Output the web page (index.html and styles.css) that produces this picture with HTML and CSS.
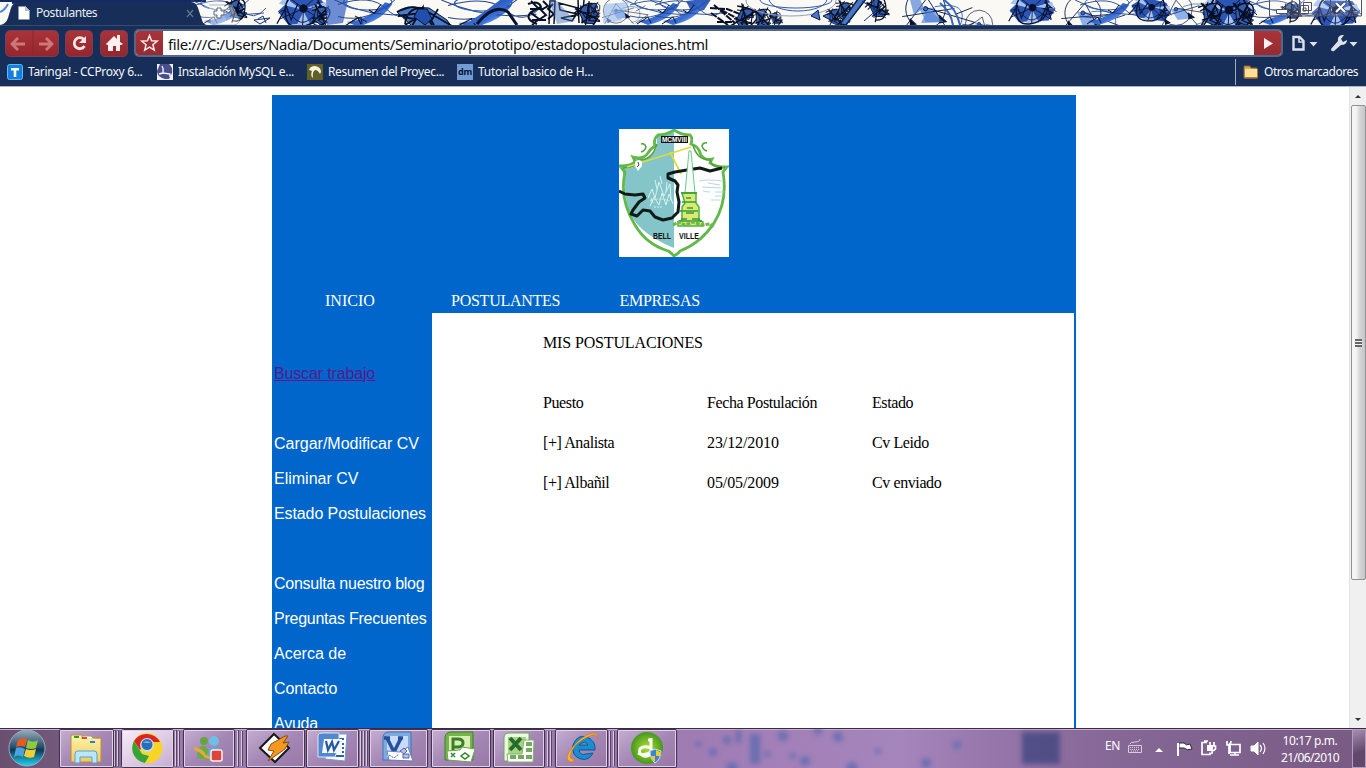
FILE: index.html
```html
<!DOCTYPE html>
<html lang="es">
<head>
<meta charset="utf-8">
<title>Postulantes</title>
<link rel="stylesheet" href="styles.css">
</head>
<body>
<div class="screen">
<header class="browser">
  <div class="tabstrip">
    <svg class="art" width="1366" height="25" viewBox="0 0 1366 25">
      <defs>
        <linearGradient id="ink" x1="0" y1="0" x2="1" y2="1"><stop offset="0" stop-color="#1c3f9c"/><stop offset=".6" stop-color="#3a70d8"/><stop offset="1" stop-color="#dce8fb"/></linearGradient>
        <g id="wheel" fill="none" stroke="#0a1638">
          <path d="M3 12 18-2 48-1 57 10 49 24 14 26Z" fill="#2c55b4" stroke="none"/>
          <path d="M28 10 4 4 10-3Z M30 12 22 28 38 27Z M34 8 53 2 56 11Z" fill="#a5c2f3" stroke="none"/>
          <circle cx="30" cy="9" r="4" fill="#070d22"/><path d="M11 8Q12-5 28-8t20 16q-1 17-20 20T11 8" stroke-width="1.700"/>
          <path d="M30 9 5 20M30 9 52 23M30 9 44-4M30 9 14-3M30 9 29 27M4 14C14 2 20 30 34 22S48 2 58 14"/>
          <path d="M2 25 12 7l5 14 7-17M39 25l8-19 5 17M44 2l8 7-9 1 11 5-12 3" stroke-width="1.400"/>
        </g>
        <g id="sweep" fill="none">
          <path d="M8 21Q28 19 43 3L49 5Q40 20 18 25Z" fill="url(#ink)"/>
          <path d="M0 5Q30-5 44 9T70 8M0 16Q28 23 55-2M-5 0Q31 19 68 13" stroke="#26458f" stroke-width=".9"/>
          <ellipse cx="27" cy="3" rx="22" ry="7" stroke="#2858b6"/><path d="m7 24 11-7 3 6m7-13 5 3 6-8" stroke="#071027"/>
        </g>
        <g id="scrawl" fill="none" stroke="#060d22">
          <path d="M4 5 14 0 20 7 10 14 24 19 16 25 5 20Z" fill="#345eae"/>
          <path d="M-2 5Q28-7 23 12T5 25M1 0 23 24M20-2 3 27M2 19l20-6" stroke-width="1.500"/>
          <path d="m8 7 6 4 3-7 4 10-10 5 12 6M0 9l7-3 2 9 8-4M3 0l3 6 3-7m2 21 3-7 3 4" stroke-width="1.200"/>
        </g>
        <g id="compass" fill="none" stroke="#0b1a48" stroke-width=".8">
          <path d="m14 8 14-2 9 12-15 2Z" fill="#8eb0ea" stroke="none"/><path d="M28 5q24-8 26 5T42 25" stroke="#336bc8"/>
          <circle cx="20" cy="8" r="18"/><path d="M20-2 4 27M20-2 45 27M0 18l46-14M20 7 66 14 48 26M48 9l14-8"/><circle cx="20" cy="8" r="2" fill="#3866c2"/><path d="m7 19 6 4-5 2M33 12l7 5-6 2" fill="#081026" stroke-width="1.200"/>
        </g>
      </defs>
      <rect width="1366" height="25" fill="#faf9f3"/>
      <g stroke="#142a67" fill="none"><path d="M0 1H206M12 3l18-3 14 2 12-2 13 3 18-2 15 1 22-3 13 3 19-2 21 3 21-3" stroke-width="2"/><path d="M0 12q5-2 8-8" stroke="#4f86dc" stroke-width="2"/></g>
      <use href="#sweep" x="196"/><use href="#scrawl" transform="translate(225 2) rotate(-12) scale(.8)"/><path d="m254 20 16-2-10 6Zm4-1 5-3 3 7" fill="none" stroke="#17357d"/>
      <use href="#wheel" transform="translate(275 0) scale(.95)"/><use href="#scrawl" transform="translate(314 4) rotate(15) scale(.75)"/><path d="m326 0 22 0-5 23-16 2Z" fill="#315ec2" opacity=".7"/>
      <use href="#sweep" transform="translate(338 -1) scale(1.1)"/><path d="m352 21 9-4 1 7m-7-8 12 6" fill="none" stroke="#111b36"/>
      <g fill="none" stroke="#081127"><path d="m397 12 15-5 17 1 18 12 4 6h-39Z" fill="#477ccc"/><path d="M397 12q24-14 37 13M405 24q2-15 15-16l12 17M398 16l30-4 24 14M412 26l11-19 2 19m-22-9 12 2-10 6m33-16-8 14" stroke-width="1.800"/><path d="m418 9 9 0 5 10-7 6-11-8Z" fill="#224fae"/></g>
      <use href="#sweep" transform="translate(448 0) scale(1.3 1.1)"/><path d="M469 22Q485 12 500 0L514 0Q497 16 482 25Z" fill="url(#ink)"/><path d="M477 24Q494 3 508 12l9 13" fill="none" stroke="#07132f" stroke-width="3"/>
      <g fill="none" stroke="#071127" stroke-width="2"><path d="M528 4q11-4 13 3l-10 5q-7 7 6 12M531 1l7 7-7 5 8 6-7 6m11-24 5 5-7 4 5 5-6 4m13-15-5 5 6 5-6 5M530 9h14m-12 11h14"/><path d="m549 24 1-23 5 0-1 23m5-21 19 5-1 6-17-4Zm2 15 15-3-4 6Zm17-18 1 23m5-23-2 23" stroke-width="1.500"/></g><path d="m549 1 8 0 18 20-18 3Z" fill="#3d6abc" opacity=".45"/>
      <use href="#scrawl" transform="translate(574 9) rotate(-22) scale(.85)"/><use href="#scrawl" transform="translate(587 3) scale(.55)"/><use href="#compass" transform="translate(602 5) scale(.7)"/><path d="m605 4 24-2-8 19-18 2Z" fill="#92b7ed" opacity=".6"/>
      <use href="#sweep" x="630"/><path d="m686 1 26-3-8 12-12 3Z" fill="#365fc0"/><use href="#sweep" x="655"/>
      <path d="m710 8 17 1 23 9m-39-5 17 12m-14-20 21 18m-14-13 27 14m-31-2h17" fill="none" stroke="#0a1025" stroke-width="2" stroke-dasharray="7 1"/>
      <use href="#scrawl" transform="translate(741 3) rotate(30) scale(.9)"/><use href="#scrawl" transform="translate(753 9) scale(.75)"/><use href="#scrawl" transform="translate(768 15) rotate(-20) scale(.5)"/>
      <g fill="none" stroke="#3158aa"><ellipse cx="796" cy="0" rx="36" ry="8"/><ellipse cx="798" cy="-1" rx="29" ry="12"/><ellipse cx="791" cy="1" rx="45" ry="15" stroke="#8ba1ce"/></g>
      <path d="m811 16 7-6 2 10Zm12 0 13-6-2 12Z" fill="#4675d2" stroke="#0a1a46"/><use href="#scrawl" transform="translate(827 9) scale(.65)"/><use href="#scrawl" transform="translate(838 0) rotate(15) scale(.75)"/><path d="M840 24 858-1h8l-20 26Z" fill="#4677c9" stroke="#101e40" stroke-width="1.500"/><use href="#scrawl" transform="translate(865 3) rotate(-22) scale(.8)"/><path d="m862 1 24 17m-1-15-21 18m10-23 0 20" stroke="#123684"/>
      <use href="#compass" transform="translate(905 -3) rotate(8) scale(1.100)"/><path d="m910 0 10-1 4 9-10 7Zm18 9 16 13-23 1Z" fill="#4c7ed4" opacity=".65"/><path d="M944 0q12 8 16 25M940 3q11 9 13 22" fill="none" stroke="#3866bb" stroke-width="2"/>
      <use href="#compass" transform="translate(968 12) rotate(25) scale(.75)"/><use href="#wheel" transform="translate(1007 0) scale(.85)"/>
      <use href="#compass" transform="translate(1065 1) rotate(12)"/><use href="#sweep" x="1080"/><use href="#wheel" transform="translate(1131 -4) rotate(12) scale(.75)"/><use href="#compass" transform="translate(1158 2) scale(.9)"/>
      <use href="#wheel" transform="translate(1199 1) scale(1)"/><use href="#scrawl" transform="translate(1200 3) scale(.9)"/><use href="#scrawl" transform="translate(1232 3) scale(.9)"/><use href="#sweep" x="1252"/><use href="#scrawl" transform="translate(1280 7) rotate(-25) scale(.7)"/><use href="#wheel" transform="translate(1309 2) scale(.9)"/>
      <path d="M206 0h12l8 19q1 6-7 6H200Z" fill="#f5f6f8" opacity=".25"/>
      <path d="M209 5h23l7 14q1 5-5 6h-23" fill="#fff" fill-opacity=".35" stroke="#8795ad" stroke-opacity=".65"/>
      <path d="M217 8h4v3h3v4h-3v3h-4v-3h-3v-4h3Z" fill="#fff" stroke="#5b6576"/>
      <path d="M0 25Q6 24 8 18L11 8Q13 2 18 2H191Q196 2 198 8L202 20Q203 25 208 25Z" fill="#172e58"/>
      <path d="m187 10 6 7m0-7-6 7" stroke="#65738d" stroke-width="1.300"/>
      <path d="M18.500 6.500h7l4 4v9h-11Z" fill="#fff"/><path d="M25 6v5h5Z" fill="#b9c2d0"/>
      <path d="M1269 0h93v16h-93Z" fill="#fff" opacity=".18"/>
      <g fill="none" stroke="#4d5364"><path d="M1269.500 0v16h92V0M1299.500 0v16M1330.500 0v16"/><path d="M1276.500 9.500h11v4h-11Z" fill="#fff"/><path d="M1303.500 2.500h8v8h-8ZM1300.500 5.500h8v8h-8ZM1303 8h3v3h-3Z" fill="#fff"/><path d="m1336 3 9 9m0-9-9 9" stroke="#34394c" stroke-width="3.500"/><path d="m1336 3 9 9m0-9-9 9" stroke="#fff" stroke-width="2.200"/></g>
    </svg>
    <span class="tab-title">Postulantes</span>
  </div>
  <div class="toolbar">
    <div class="navbtn pair"><svg width="54" height="26"><path d="M27 0v26" stroke="#8b2431"/><path d="m12 7-6 6 6 6M6 13h13M40 7l6 6-6 6M46 13H33" fill="none" stroke="#cf777b" stroke-width="2.800"/></svg></div>
    <div class="navbtn reload"><svg width="28" height="26"><path d="M17.800 8.500A5.500 5.500 0 1 0 18.500 15" fill="none" stroke="#f9e5e5" stroke-width="2.800"/><path d="M20 5v7h-7Z" fill="#f9e5e5"/></svg></div>
    <div class="navbtn home"><svg width="28" height="26"><path d="m5 13 8-8 3 3V4h3v7l3 2-2 1h-1v6h-4v-5h-3v5H7v-6H6Z" fill="#fff1f1"/></svg></div>
    <div class="omnibox">
      <div class="star"><svg width="27" height="26"><path d="m13.500 4.500 2.100 5.200 5.600.4-4.300 3.600 1.400 5.500-4.800-3-4.800 3 1.300-5.500-4.200-3.600 5.600-.4Z" fill="none" stroke="#ffe9e9" stroke-width="1.500"/></svg></div>
      <span class="url">file:///C:/Users/Nadia/Documents/Seminario/prototipo/estadopostulaciones.html</span>
      <div class="go"><svg width="27" height="26"><path d="m10 7 9 5.500-9 5.500Z" fill="#fff1f1"/></svg></div>
    </div>
    <svg class="menus" width="78" height="28"><path d="M10.500 7h6l4 4v8.500h-10Z" fill="#172e58" stroke="#dce2ec" stroke-width="2.400"/><path d="M16 7v5h5" fill="none" stroke="#dce2ec" stroke-width="1.600"/><path d="M26.500 12h8l-4 4.500ZM66.500 12h8l-4 4.500Z" fill="#dce2ec"/><path d="m48 19 7-8q-1-5 4-6h2l-3 4 2 3 4-2q0 5-6 5l-7 6q-3 1-3-2Z" fill="#dce2ec"/></svg>
  </div>
  <nav class="bookmarks">
    <a class="bm bm1"><svg width="16" height="16"><rect x=".5" y=".5" width="15" height="15" rx="2" fill="#1180df" stroke="#64b4f5"/><path d="M4 4h8v2.500H9.300V13H6.700V6.500H4Z" fill="#fff"/></svg><span>Taringa! - CCProxy 6...</span></a>
    <a class="bm bm2"><svg width="16" height="16"><path d="M0 0h16v16H0Z" fill="#f1f1f8"/><path d="M3 0h9q4 3 3 9l-3 6H8Q0 13 0 7Z" fill="#494e91"/><path d="M5 2q2 3 1 7l7 1v3M6 9l-4 1" fill="none" stroke="#fff" stroke-width="1.300"/></svg><span>Instalación MySQL e...</span></a>
    <a class="bm bm3"><svg width="16" height="16"><path d="M0 0h16v16H0Z" fill="#605f27"/><path d="M2 6q1-4 6-4 6 1 6 6l-1 2q-2-4-5-4-3 2-2 8-3-2-1-7Z" fill="#f5f4df"/></svg><span>Resumen del Proyec...</span></a>
    <a class="bm bm4"><i class="dm">dm</i><span>Tutorial basico de H...</span></a>
    <a class="bm others"><svg width="16" height="16"><path d="M1 2h6l1 2h6v10H1Z" fill="#dba84e" stroke="#81653c"/><path d="M2 5h12v8H2Z" fill="#ffe09a"/><path d="M14.500 5v9H2" fill="none" stroke="#b4772c"/></svg><span>Otros marcadores</span></a>
  </nav>
</header>
<main class="viewport">
  <div class="site">
    <div class="banner">
      <svg class="crest" width="110" height="128" viewBox="0 0 110 128">
        <rect width="110" height="128" fill="#fff"/>
        <path d="M55 2v117Q15 103 8 76L3 38q11-1 12-8h8q10 0 15-12V6Z" fill="#83c5c8"/>
        <path d="M39 6q8 0 16-5 8 5 16 5 3 3 1 9 8 3 9 9 3 8 12 6l-2 4q5 4 17 4l-4 5q5 29-9 51-13 20-34 28-1 2-6 5-5-5-6-5-22-7-33-26Q0 70 6 43l-5-6q13 0 15-5l-2-4q10 3 15-4 2-4 7-7-2-7 3-11Z" fill="none" stroke="#62b848" stroke-width="2.800"/>
        <path d="M4 39q14-1 15-8 14 1 19-16M106 39q-13 0-15-8-13 0-17-15M22 15q4-1 5 3-1 4-5 5M88 14q-4-1-5 3 1 4 5 5" fill="none" stroke="#54a33c" stroke-width="1.500"/>
        <path d="M8 38 72 18M51 23l11 22" stroke="#dedc3b" stroke-width="1.700"/><path d="M16 33q4-4 7 0v4l-4 5-3-5Z" fill="#fff"/><path d="M19 33l1 3-2 2" fill="none" stroke="#444"/>
        <path d="M0 62 6 65 16 66 24 65 26 69 20 73 14 81 12 85 18 87 24 81 31 82 36 88 44 91 53 89 59 83 60 73 58 63 59 56 56 52 49 49 49 45 56 43 68 41 81 39 91 42 103 39" fill="none" stroke="#101b18" stroke-width="3" stroke-linejoin="round"/>
        <g fill="none" stroke="#d9f1ee"><path d="m29 69 4-9 3 9 4-16 5 14 6-12 1 16M31 77l4-9 5 8 3-12 4 12 3-11 4 10M38 60l-2-9m7 4-2-8m6 16 1-10M34 74l-2-5"/><path d="M31 72q8-4 20 0M35 78h9" stroke-dasharray="2 1"/></g>
        <path d="m70 22-4 42h10L72 22Z" fill="#f4fff8" stroke="#73c693"/><path d="M63 64h14v10l3 4v13l4 2v4H59v-4l4-2V78l3-4Z" fill="#dce874" stroke="#48b640" stroke-width="1.500"/>
        <path d="M67 69h5m-5 4h5m-4 6h6m-7 5h8m-13 6h6m5 0h8M62 64h16M63 73h14M61 82h18M60 92h23" fill="none" stroke="#369b3a" stroke-width="1.500"/><path d="m54 96 6-3 6 3 8-3 9 3 8-1 4 3" fill="none" stroke="#70b74b" stroke-width="3" stroke-dasharray="4 1"/>
        <path d="M80 52q9-2 23 0m-20 6 19 1m-18 3q4 1 7 1m5 0h10m-10 4h8m-12 4h9m-12-17 12 2" fill="none" stroke="#a5cbd6" stroke-width=".8"/>
        <path d="M42 7h27v7H42Z" fill="#111"/><text x="43" y="13" textLength="25" lengthAdjust="spacingAndGlyphs" class="crest-top">MCMVIII</text>
        <text x="34" y="110" textLength="18" lengthAdjust="spacingAndGlyphs" class="crest-name">BELL</text><text x="60" y="110" textLength="20" lengthAdjust="spacingAndGlyphs" class="crest-name">VILLE</text>
      </svg>
    </div>
    <nav class="menu"><a>INICIO</a><a>POSTULANTES</a><a>EMPRESAS</a></nav>
    <div class="columns">
      <aside class="side">
        <a class="visited">Buscar trabajo</a><i></i>
        <a>Cargar/Modificar CV</a><a>Eliminar CV</a><a class="snug">Estado Postulaciones</a><i></i>
        <a class="tight">Consulta nuestro blog</a><a class="tight">Preguntas Frecuentes</a><a>Acerca de</a><a class="snug">Contacto</a><a class="tight">Ayuda</a>
      </aside>
      <section class="content">
        <div class="heading">MIS POSTULACIONES</div>
        <div class="grid">
          <span>Puesto</span><span>Fecha Postulación</span><span>Estado</span>
          <span>[+] Analista</span><span class="date-cell">23/12/2010</span><span>Cv Leido</span>
          <span>[+] Albañil</span><span class="date-cell">05/05/2009</span><span>Cv enviado</span>
        </div>
      </section>
    </div>
  </div>
  <div class="scroll"><b class="up"></b><div class="thumb"><i></i></div><b class="down"></b></div>
</main>
<footer class="taskbar">
  <svg class="apps" width="1100" height="40" viewBox="0 728 1100 40">
    <defs>
      <linearGradient id="glass" x1="0" y1="0" x2="1" y2="1"><stop offset="0" stop-color="#c5afd1"/><stop offset=".5" stop-color="#a487b5"/><stop offset="1" stop-color="#9877a7"/></linearGradient>
      <linearGradient id="lit" x1="0" y1="0" x2="1" y2="1"><stop offset="0" stop-color="#f8effb"/><stop offset="1" stop-color="#c5acd0"/></linearGradient>
      <linearGradient id="orb" x1="0" y1="0" x2="0" y2="1"><stop offset="0" stop-color="#96adba"/><stop offset=".48" stop-color="#274d68"/><stop offset=".55" stop-color="#0e3854"/><stop offset="1" stop-color="#20d5f0"/></linearGradient>
      <radialGradient id="lime"><stop offset="0" stop-color="#b5db36"/><stop offset="1" stop-color="#44991c"/></radialGradient>
      <linearGradient id="yellow" x1="0" y1="0" x2="0" y2="1"><stop offset="0" stop-color="#fff5a8"/><stop offset="1" stop-color="#edca63"/></linearGradient>
      <filter id="soft" x="-20%" y="-20%" width="140%" height="140%"><feGaussianBlur stdDeviation="2.500"/></filter>
    </defs>
    <g filter="url(#soft)" fill="#5d6bb0" opacity=".8"><circle cx="698" cy="744" r="3"/><circle cx="713" cy="752" r="4"/><circle cx="727" cy="740" r="4"/><path d="M736 730h5v13h-5Zm14 4h10v30h-10Z"/><circle cx="783" cy="736" r="5"/><circle cx="732" cy="768" r="6"/><circle cx="767" cy="754" r="3"/><circle cx="793" cy="756" r="3"/><circle cx="805" cy="761" r="5"/><circle cx="818" cy="731" r="4"/><circle cx="838" cy="737" r="5"/><circle cx="852" cy="768" r="6"/><circle cx="878" cy="751" r="3"/><circle cx="926" cy="763" r="5"/><circle cx="957" cy="745" r="4"/><path d="M1022 732h38v32h-38Z" fill="#434780"/></g>
    <g fill="none" stroke="#564665"><path d="M115.500 730v37M118.500 731v35M176.500 730v37M179.500 731v35M238.500 730v37M242.500 731v35M361.500 731v36M364.500 731v35M367.500 731v35M548.500 731v36M551.500 731v35M610.500 731v36M614.500 731v35"/></g>
    <g fill="none" stroke="#ddcae3"><path d="M114.500 731v35M117.500 731v35M175.500 731v35M178.500 731v35M237.500 731v35M241.500 731v35M360.500 731v35M363.500 731v35M366.500 731v35M547.500 731v35M550.500 731v35M609.500 731v35M613.500 731v35"/></g>
    <g fill="url(#glass)" stroke="#44334e" stroke-width="1.200"><rect x="59.500" y="729.500" width="54" height="38" rx="2"/><rect x="183.500" y="729.500" width="51" height="38" rx="2"/><rect x="246.500" y="729.500" width="58" height="38" rx="2"/><rect x="306.500" y="729.500" width="52" height="38" rx="2"/><rect x="369.500" y="729.500" width="58" height="38" rx="2"/><rect x="431.500" y="729.500" width="59" height="38" rx="2"/><rect x="493.500" y="729.500" width="51" height="38" rx="2"/><rect x="555.500" y="729.500" width="52" height="38" rx="2"/><rect x="617.500" y="729.500" width="59" height="38" rx="2"/></g>
    <rect x="121.500" y="729.500" width="52" height="38" rx="2" fill="url(#lit)" stroke="#44334e"/>
    <g fill="none" stroke="#e1d1e6"><path d="M60.500 730.500h52v36h-52ZM122.500 730.500h50v36h-50ZM184.500 730.500h49v36h-49ZM247.500 730.500h56v36h-56ZM307.500 730.500h50v36h-50ZM370.500 730.500h56v36h-56ZM432.500 730.500h57v36h-57ZM494.500 730.500h49v36h-49ZM556.500 730.500h50v36h-50ZM618.500 730.500h57v36h-57Z"/></g>
    <circle cx="27" cy="748" r="18" fill="url(#orb)" stroke="#9daac0"/><path d="M18 740q4-3 9-1l-2 8q-5-2-9 0Z" fill="#e95a23"/><path d="M28 740q5 3 10 0l-2 8q-5 2-10 0Z" fill="#8acb3f"/><path d="M16 748q4-2 9 1l-2 8q-5-3-9 0Z" fill="#4ba2df"/><path d="M26 749q5 2 10 0l-2 8q-5 2-10-1Z" fill="#f5cf31"/>
    <g><path d="M71 739v-4h11l3 3h16v24H71Z" fill="url(#yellow)" stroke="#bc8b3f"/><path d="M74 736h5v2h-5Z" fill="#2e9931"/><path d="M82 739v-3h9l2 2h7" fill="#fff" stroke="#b49650"/><path d="M82 737h5v2h-5Z" fill="#dc4b40"/><path d="M90 741h5v2h-5Z" fill="#2484cd"/><path d="M75 763v-9q0-3 3-3h16q3 0 3 3v9h-5v-6H80v6Z" fill="#b9e8fc" stroke="#5da1ca"/></g>
    <g><circle cx="147" cy="748" r="15" fill="#f5d82f"/><path d="M134 741a15 15 0 0 1 26 1h-13l-7 8Z" fill="#d92524"/><path d="m134 741 8 13 7 2-4 7a15 15 0 0 1-11-22Z" fill="#35a43d"/><path d="m152 754-7 9a15 15 0 0 0 16-21h-14Z" fill="#f7d623"/><circle cx="147" cy="745" r="7" fill="#d8dad9"/><circle cx="147" cy="744.500" r="5.500" fill="#266fba"/><path d="M143 743q4-4 8 0" fill="#6dace4"/></g>
    <g><circle cx="204" cy="741" r="4" fill="#64a442"/><path d="M197 758q1-14 7-12 6 1 5 14Z" fill="#69aa48"/><circle cx="214" cy="741" r="5" fill="#72bde4"/><path d="M207 757q1-13 8-10 7 0 7 14h-12Z" fill="#64a9d5"/><path d="M194 747q10 2 12 8 8 4 18-3-8 9-19 6-4-6-11-8Z" fill="#e6a934"/><rect x="211" y="750" width="11" height="11" rx="2" fill="#dd463c" stroke="#fff0ed" stroke-width="1.500"/></g>
    <g><path d="m274 734 15 14-14 14-15-14Z" fill="#fff" stroke="#181819" stroke-width="2"/><path d="m285 736-14 8-3 6 6 1-6 10 17-12 4-7-6 1 5-7Z" fill="#f4991f" stroke="#8b4c0d"/></g>
    <g><path d="M327 734h20l-2 27-20-2Z" fill="#fff" stroke="#739bd0"/><path d="M331 739h13m-13 5h13m-13 4h13m-14 4h14m-14 4h14" stroke="#2862b2" stroke-width="2"/><path d="M318 735q1-2 4-2h17v5q-2 15-4 19h-17Z" fill="#5088cf" stroke="#d7e6f7"/><path d="M324 739h18v14h-20Z" fill="#f5f7fa"/><path d="m326 741 2 9 4-8 2 8 5-9" fill="none" stroke="#2656a4" stroke-width="2.200"/></g>
    <g><path d="M383 737q1-5 6-5h22v28h-28Z" fill="#7faade" stroke="#3f74bb"/><path d="M387 736h21v21h-21Z" fill="#c6dcfa"/><path d="m387 738 7 14 7-14m-17 0h6m8 0h5" fill="none" stroke="#274f9c" stroke-width="3.500"/><path d="m387 751 13 1 8-5 5 14-24-1Z" fill="#fff" stroke="#637fb7"/><path d="m400 751 4-3 3 3-3 3Zm3 7h6v-4h-6Z" fill="#b8bdea" stroke="#5b66ad"/><path d="m389 755 5 3 5-4" fill="none" stroke="#5363a8" stroke-dasharray="2 1"/></g>
    <g><path d="M445 737q1-5 6-5h22v28h-28Z" fill="#75b446" stroke="#3e7e30"/><path d="M449 736h21v20h-21Z" fill="#d9efb6"/><path d="M453 751v-12h5q5 0 5 4t-5 4h-5" fill="none" stroke="#3b8026" stroke-width="3"/><path d="m447 751 13-1 2-3 13 2-4 13-23-2Z" fill="#fff" stroke="#63a945"/><path d="m451 753 4 4m0-4-4 4m10-1 4-3 4 3-4 3Z" fill="none" stroke="#37812f" stroke-width="1.500"/></g>
    <g><path d="M504 738q0-5 5-5h20v28h-25Z" fill="#edf8e4" stroke="#6baa52"/><path d="M508 737h18v18h-18Z" fill="#a6d581"/><path d="m510 738 11 12m0-12-11 12" stroke="#276c2c" stroke-width="4"/><path d="M524 740h10l-1 22h-25l-1-8h15Z" fill="#fff" stroke="#82b06c"/><path d="M526 742h6v4h-6Zm0 6h6v4h-6Zm0 7h6v4h-6Zm-8 0h6v4h-6Zm-8 0h6v4h-6Z" fill="#75a95e"/></g>
    <g><path d="M595 750h-16q1 6 7 4l7-1q-4 8-12 6-10-3-8-14 4-11 14-8 9 4 8 13Zm-16-5h9q-3-5-9 0" fill="#1b8cd0" fill-rule="evenodd" stroke="#075996"/><path d="M569 761q-5-3 3-13 10-13 21-15 5 0 5 6-1-5-6-4-20 8-22 22 1 3 5 2-3 5-6 2Z" fill="#fbb329" stroke="#c77710" stroke-width=".6"/></g>
    <g><circle cx="647" cy="748" r="16" fill="url(#lime)"/><path d="M651 738v14q-1 5-7 4-6-2-4-7 3-4 11-1m0-8h-3m-10 13q6 4 16-3" fill="none" stroke="#f6fff0" stroke-width="3"/><path d="m655 749 6 2q0 8-6 12-5-4-5-12Z" fill="#3487dc" stroke="#d5d9e1"/><path d="M656 750v6h-5q1 4 4 6v-6h5v-4Z" fill="#f6ca25"/></g>
  </svg>
  <div class="tray"><span class="lang">EN</span>
    <svg width="150" height="40"><g fill="none" stroke="#d8ceda"><path d="M2.500 16.500h13v7h-13Z"/><path d="M4 18.500h10M4 20.500h10M5 22h8" stroke-dasharray="1 1"/><path d="M4 15q0-2 5-2t5-3"/></g><path d="M29 23h8l-4-4Z" fill="#fff"/><path d="M53 14h5q2 3 6 1l2 5q-5 2-8-1h-5Z" fill="#fff" stroke="#30263a"/><path d="M52 14v13" stroke="#fff" stroke-width="2"/><g fill="none" stroke="#fff" stroke-width="1.700"><path d="M81 13.500h-5v12h8v-2M78 12h4M82.500 17v3q4.500 3 7 0v-3Zm1.500 0v-4m4 4v-4m-2 8v4"/><path d="M81 16h6v6h-6Z" fill="#fff" stroke="none"/><path d="M104 15.500h10v8h-10Zm5 8v2.500m-5 0h9M101 12v4q4 0 4-4m-2 4v9"/><path d="M125 17h3l4-4v13l-4-4h-3Z" fill="#fff" stroke-width="1"/><path d="M134 16q3 3 0 7m3-9q4 5 0 11" stroke-width="1.200"/></g></svg>
    <div class="clock"><span class="time">10:17 p.m.</span><span class="date">21/06/2010</span></div><i class="peek"></i>
  </div>
</footer>
</div>
</body>
</html>
```
FILE: styles.css
```css
*{box-sizing:border-box}
body{margin:0;background:#fff}
.screen{width:1366px;height:768px;overflow:hidden;display:flex;flex-direction:column;font-family:"Noto Sans","Open Sans",sans-serif}
svg{display:block;flex:none}
.browser{height:87px;flex:none;background:#172e58;border-bottom:1px solid #aeb5c1}
.tabstrip{height:25px;position:relative}
.tab-title{position:absolute;left:36px;top:4px;font-size:12px;line-height:18px;color:#e9edf4;letter-spacing:-.45px}
.toolbar{height:33px;display:flex;padding:4px 0 0 5px;border-top:1px solid #354b70}
.navbtn{height:27px;border:1px solid #70405b;border-radius:5px;background:linear-gradient(#a93439,#95262d);display:flex;overflow:hidden;flex:none}
.pair{width:54px;margin-right:6px}
.reload,.home{width:28px;margin-right:7px}
.home{margin-right:6px}
.omnibox{height:28px;width:1149px;margin-top:-1px;border:2px solid #566686;border-radius:5px;background:#fff;display:flex;overflow:hidden;flex:none}
.star,.go{width:27px;background:linear-gradient(#a93439,#962b31);flex:none}
.url{flex:1;padding-left:5px;font-size:15px;line-height:26px;white-space:nowrap;letter-spacing:-.4px;color:#111}
.bookmarks{height:28px;display:flex;position:relative;align-items:center;color:#f5f7fb;font-size:12px;letter-spacing:-.3px}
.bm{display:flex;align-items:center;gap:5px;white-space:nowrap;flex:none}
.bm span{margin-top:-1px}
.bm1{margin-left:7px;width:150px}
.bm2{width:150px;letter-spacing:-.35px}
.bm3{width:150px;letter-spacing:-.35px}
.bm4{letter-spacing:-.25px}
.dm{width:16px;height:16px;background:#729bd5;color:#071630;font:bold 9px/15px "Noto Sans",sans-serif;text-align:center}
.others{margin-left:auto;padding:5px 8px 5px 7px;border-left:1px solid #a1acbd;letter-spacing:-.48px}
.viewport{height:641px;flex:none;display:flex;justify-content:space-between;overflow:hidden}
.site{width:804px;height:641px;margin:8px 0 0 272px;background:#06c;overflow:hidden}
.banner{height:193px;padding:34px 0 0 347px}
.crest-top{font:bold 7px "Liberation Sans",sans-serif;fill:#fff}
.crest-name{font:bold 9px "Liberation Sans",sans-serif;fill:#111}
.menu{height:25px;display:flex;color:#fff;font:16px/25px "Liberation Serif",serif}
.menu a:nth-child(1){margin-left:53px;width:126px}
.menu a:nth-child(2){width:168.500px;letter-spacing:-.25px}
.menu a:nth-child(3){letter-spacing:-.3px}
.columns{display:flex;height:430px}
.side{width:160px;flex:none;display:flex;flex-direction:column;padding:43px 0 0 2px;color:#fff;font:16px/35px "Liberation Sans",sans-serif}
.side a,.side i{height:35px;flex:none;white-space:nowrap}
.side .snug{letter-spacing:-.1px}
.side .tight{letter-spacing:-.25px}
.visited{color:#551a8b;text-decoration:underline;letter-spacing:-.15px}
.content{width:642px;background:#fff;padding:20px 0 0 111px;font:16px/20px "Liberation Serif",serif;color:#000}
.heading{letter-spacing:-.14px}
.grid{display:grid;grid-template-columns:164px 165px 120px;grid-auto-rows:40px;margin-top:40px;letter-spacing:-.4px}
.date-cell{letter-spacing:-.1px}
.scroll{width:17px;background:#f0f0f0;border-left:1px solid #e3e3e3;display:flex;flex-direction:column;align-items:center}
.up,.down{width:16px;height:18px;flex:none;display:flex;align-items:center;justify-content:center}
.up:after,.down:after{content:"";border:3.5px solid transparent;border-top:0;border-bottom-color:#333}
.down:after{border:3.5px solid transparent;border-bottom:0;border-top-color:#333}
.thumb{width:15px;height:475px;border:1px solid #929292;border-radius:2px;background:linear-gradient(90deg,#f5f5f5 30%,#d6d6d8 60%,#c5c5c8);display:flex;align-items:center;justify-content:center}
.thumb i{width:7px;height:8px;background:repeating-linear-gradient(#666 0 2px,#f5f5f5 2px 3px)}
.down{margin-top:auto}
.taskbar{height:40px;flex:none;background:linear-gradient(90deg,#695071 0,#715779 50px,#9c7bab 180px,#9a79ad 600px,#a27fb7 760px,#a585bb 900px,#9776ac 990px,#886999 1090px,#80638f 1200px,#795a83 1366px);border-top:1px solid #382b43;box-shadow:inset 0 1px #c9b3d2;overflow:hidden;display:flex}
.apps{margin-top:-1px}
.tray{display:flex;color:#fff;font-size:12px;letter-spacing:-.5px;width:266px;flex:none}
.lang{width:21px;margin-left:5px;line-height:34px;flex:none}
.clock{width:80px;height:39px;display:flex;flex-direction:column;align-items:center;padding-top:3px;line-height:17px;margin-left:-6px;flex:none}
.time{letter-spacing:-.4px}
.date{letter-spacing:-.6px}
.peek{width:14px;height:39px;margin-left:auto;border:1px solid #b49dbd;background:linear-gradient(160deg,#a48eae,#63486e 60%)}
```
